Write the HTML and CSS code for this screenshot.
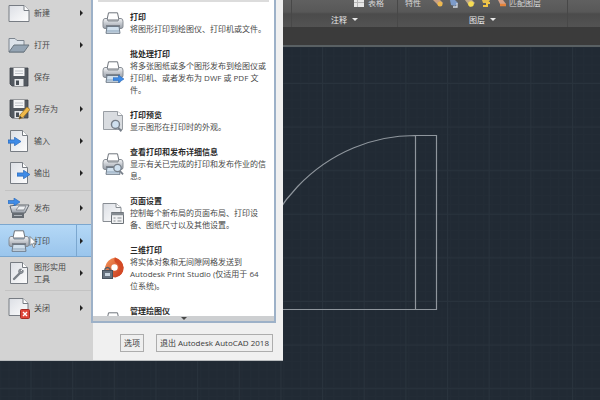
FILE: index.html
```html
<!DOCTYPE html>
<html lang="zh-CN">
<head>
    <meta charset="UTF-8">
    <meta name="viewport" content="width=device-width, initial-scale=1.0">
    <title>Autodesk AutoCAD 2018</title>
    <link rel="stylesheet" href="styles.css">
</head>
<body>

    <!-- 图标共用的图形 -->
    <svg class="defs" width="0" height="0" aria-hidden="true">
        <defs>
            <linearGradient id="paper" x1="0" y1="0" x2="1" y2="1">
                <stop offset="0" stop-color="#dcdfe5"/>
                <stop offset="1" stop-color="#fdfdfd"/>
            </linearGradient>
            <linearGradient id="metal" x1="0" y1="0" x2="0" y2="1">
                <stop offset="0" stop-color="#f3f4f6"/>
                <stop offset="1" stop-color="#969da7"/>
            </linearGradient>
            <linearGradient id="flame" x1="0" y1="0" x2="1" y2="1">
                <stop offset="0" stop-color="#f79a5c"/>
                <stop offset="1" stop-color="#c5321a"/>
            </linearGradient>
            <symbol id="arrow" viewBox="0 0 12 8">
                <path d="M0 2.500h6V0l6 4-6 4V5.500H0z" fill="#3f8be6" stroke="#2565b5" stroke-width=".6"/>
            </symbol>
            <symbol id="page" viewBox="0 0 22 22">
                <path d="M2.500 .5h12l5 5v16h-17z" fill="url(#paper)" stroke="#777c83"/>
                <path d="M14.500 .5v5h5" fill="#fff" stroke="#777c83"/>
            </symbol>
            <symbol id="printer" viewBox="0 0 22 22">
                <path d="M5 8L6.500 .8h9L17 8z" fill="#fff" stroke="#70757c"/>
                <path d="M3 6.500h2l1 2.500h10l1-2.500h2q2 0 2 3v5q0 2-2 2H3q-2 0-2-2v-5q0-3 2-3z" fill="url(#metal)" stroke="#7d838b" stroke-width=".9"/>
                <path d="M4 14h14" stroke="#5c626a" stroke-width="1.200"/>
                <path d="M5 14.500h12l1 6.800H4z" fill="#d0dfec" stroke="#6e7a87"/>
                <path d="M5 19h12" stroke="#8ca3b9"/>
            </symbol>
            <symbol id="floppy" viewBox="0 0 22 22">
                <path d="M2 2h18v18H4l-2-2z" fill="#535960" stroke="#3e4349" stroke-width=".8"/>
                <path d="M5.500 2h11v8h-11z" fill="#f4f5f6"/>
                <path d="M7 5h8M7 7.500h8" stroke="#c0c4c9"/>
                <path d="M6.500 13h9v7h-9z" fill="#e4e6e8"/>
                <path d="M8 14.500h3V19H8z" fill="#474d54"/>
            </symbol>
            <symbol id="lens" viewBox="0 0 12 12">
                <circle cx="5.500" cy="5" r="3.700" fill="#cfe0ef" stroke="#777f89" stroke-width="1.300"/>
                <path d="M8 8l3 3.300" stroke="#777f89" stroke-width="1.800"/>
            </symbol>
        </defs>
    </svg>

    <header class="ribbon">
        <section class="panel panel-edge"></section>
        <section class="panel panel-note">
            <div class="tools">
                <button class="tool">
                    <svg width="10" height="8" viewBox="0 0 10 8"><path d="M0 0h10v7H0z" fill="#e6e6e6"/><path d="M0 2.500h10M3.500 0v7" stroke="#b5b5b5"/></svg>
                    表格
                </button>
            </div>
            <button class="panel-title">注释 <span class="down"></span></button>
        </section>
        <section class="panel panel-layer">
            <div class="tools">
                <button class="tool">特性</button>
                <svg class="layer-icons" width="76" height="9" viewBox="0 0 76 9" aria-hidden="true">
                    <path d="M0 0h7l3 3-4 3z" fill="#c9a184"/><circle cx="7" cy="4" r="2.500" fill="#eeb94e"/>
                    <path d="M17 0h5l3 3-3 3-4-1z" fill="#7d9bc9"/><path d="M24 3v4h-4" fill="none" stroke="#d4dbe6" stroke-width="1.300"/>
                    <path d="M32 0h7l3 3-5 4z" fill="#bda88a"/><circle cx="38" cy="4" r="2.800" fill="#f7dd52"/>
                    <path d="M49 0h8l-2 3h-5z" fill="#e4be50"/><path d="M50 6h4V3h3" fill="none" stroke="#f1c443" stroke-width="2"/>
                    <path d="M65 0h5l3 4-5 2z" fill="#d4a188"/><path d="M67 5h6" stroke="#e5843c" stroke-width="2.500"/>
                </svg>
                <button class="tool">匹配图层</button>
            </div>
            <button class="panel-title">图层 <span class="down"></span></button>
        </section>
        <section class="panel panel-rest"></section>
    </header>
    <div class="tab-strip"></div>

    <main class="canvas">
        <svg class="drawing" width="100%" height="100%">
            <defs>
                <pattern id="minor" width="8.330" height="8.720" patternUnits="userSpaceOnUse">
                    <path d="M.5 0v9M0 .5h9" fill="none" stroke="#232c36" stroke-width="1"/>
                </pattern>
                <pattern id="major" x="30.500" y="36" width="41.650" height="43.600" patternUnits="userSpaceOnUse">
                    <path d="M.5 0v44M0 .5h42" fill="none" stroke="#29333d" stroke-width="1"/>
                </pattern>
            </defs>
            <rect width="100%" height="100%" fill="url(#minor)"/>
            <rect width="100%" height="100%" fill="url(#major)"/>
            <path d="M249 262.500H436.500V88.500H415A166 174 0 0 0 249 262.500M415.500 88.500v174" fill="none" stroke="#8f969d" stroke-width="1.200"/>
        </svg>
    </main>

    <div class="app-menu">
        <div class="menu-body">
            <nav class="commands">
                <button class="command">
                    <svg width="22" height="22" viewBox="0 0 22 22"><path d="M1 3.500h15l5 5v11H1z" fill="url(#paper)" stroke="#777c83"/><path d="M16 3.500v5h5" fill="#fff" stroke="#777c83"/></svg>
                    <span class="name">新建</span><span class="more"></span>
                </button>
                <button class="command">
                    <svg width="22" height="22" viewBox="0 0 22 22"><path d="M1 18V4.500h6l2 2h7V18z" fill="#dce3ea" stroke="#7c858f"/><path d="M1 18l5-7h15l-5 7z" fill="#94a4b3" stroke="#69757f"/></svg>
                    <span class="name">打开</span><span class="more"></span>
                </button>
                <button class="command">
                    <svg width="22" height="22"><use href="#floppy"/></svg>
                    <span class="name">保存</span>
                </button>
                <button class="command">
                    <svg width="22" height="22" viewBox="0 0 22 22"><use href="#floppy"/><path d="M11 21l1-4 7-8 3 2.500-7 8z" fill="#f0b94a" stroke="#9a7427" stroke-width=".8"/><path d="M11 21l1-3 2 1.500z" fill="#3b3b3b"/></svg>
                    <span class="name">另存为</span><span class="more"></span>
                </button>
                <button class="command">
                    <svg width="22" height="22" viewBox="0 0 22 22"><use href="#page"/><use href="#arrow" x="0" y="7" width="13" height="9"/></svg>
                    <span class="name">输入</span><span class="more"></span>
                </button>
                <button class="command">
                    <svg width="22" height="22" viewBox="0 0 22 22"><use href="#page"/><use href="#arrow" x="9" y="8" width="13" height="9"/></svg>
                    <span class="name">输出</span><span class="more"></span>
                </button>
                <hr class="line">
                <button class="command">
                    <svg width="22" height="22" viewBox="0 0 22 22"><path d="M2 9l7-1h12l-4 8H4z" fill="url(#metal)" stroke="#62686f"/><path d="M8 13l3-4h7l-2 4z" fill="#eef0f2" stroke="#777c83" stroke-width=".8"/><path d="M4 16h12v5H4z" fill="#666c73"/><path d="M6 18.500h8" stroke="#b1b6bb"/><use href="#arrow" x="0" y="1" width="12" height="8"/></svg>
                    <span class="name">发布</span><span class="more"></span>
                </button>
                <button class="command active">
                    <svg width="22" height="22"><use href="#printer"/></svg>
                    <span class="name">打印</span><span class="more"></span>
                    <svg class="pointer" width="8" height="12" viewBox="0 0 8 12"><path d="M1 .5v9l2-2 1.500 4 1.500-.7L4.500 7h3z" fill="#fff" stroke="#666" stroke-width=".7"/></svg>
                </button>
                <button class="command">
                    <svg width="22" height="22" viewBox="0 0 22 22"><use href="#page"/><path d="M6 17l6-6" stroke="#7b8189" stroke-width="2.400" stroke-linecap="round"/><path d="M15 8l-2 2-1-1 1.500-2q-3-.5-3 2.500 0 2 3 2 2.500-.5 1.500-3.500z" fill="#90969d" stroke="#6b7178" stroke-width=".7"/></svg>
                    <span class="name">图形实用<br>工具</span><span class="more"></span>
                </button>
                <hr class="line">
                <button class="command">
                    <svg width="22" height="22" viewBox="0 0 22 22"><path d="M1 1.500h14l5 5v12H1z" fill="url(#paper)" stroke="#777c83"/><path d="M15 1.500v5h5" fill="#fff" stroke="#777c83"/><rect x="12.500" y="12.500" width="9" height="9" rx="1" fill="#df4538" stroke="#a32c25"/><path d="M15 15l4 4m0-4l-4 4" stroke="#fff" stroke-width="1.400"/></svg>
                    <span class="name">关闭</span><span class="more"></span>
                </button>
            </nav>

            <div class="submenu">
                <div class="entries">
                    <button class="entry">
                        <svg width="22" height="22"><use href="#printer"/></svg>
                        <span class="text"><b>打印</b><span>将图形打印到绘图仪、打印机或文件。</span></span>
                    </button>
                    <button class="entry">
                        <svg width="22" height="22" viewBox="0 0 22 22"><use href="#printer"/><use href="#arrow" x="11" y="14" width="11" height="8"/></svg>
                        <span class="text"><b>批处理打印</b><span>将多张图纸或多个图形发布到绘图仪或<br>打印机、或者发布为 DWF 或 PDF 文<br>件。</span></span>
                    </button>
                    <button class="entry">
                        <svg width="22" height="22" viewBox="0 0 22 22"><path d="M1.500 1.500h14l5 4v14h-19z" fill="#d9dce0" stroke="#999ea4"/><path d="M15.500 1.500v4h5" fill="#fff" stroke="#999ea4"/><use href="#lens" x="7" y="9" width="14" height="13"/></svg>
                        <span class="text"><b>打印预览</b><span>显示图形在打印时的外观。</span></span>
                    </button>
                    <button class="entry">
                        <svg width="22" height="22" viewBox="0 0 22 22"><use href="#printer"/><use href="#lens" x="10" y="10" width="12" height="12"/></svg>
                        <span class="text"><b>查看打印和发布详细信息</b><span>显示有关已完成的打印和发布作业的信<br>息。</span></span>
                    </button>
                    <button class="entry">
                        <svg width="22" height="22" viewBox="0 0 22 22"><path d="M1 1.500h13l5 4v14H1z" fill="url(#paper)" stroke="#888d93"/><path d="M14 1.500v4h5" fill="#fff" stroke="#888d93"/><path d="M9.500 10.500h12v11h-12z" fill="#f1f2f3" stroke="#6c7278"/><path d="M9 12h13" stroke="#868c92" stroke-width="2.500"/><path d="M11.500 16h2m2 0h4m-8 3h2m2 0h4" stroke="#888d93"/></svg>
                        <span class="text"><b>页面设置</b><span>控制每个新布局的页面布局、打印设<br>备、图纸尺寸以及其他设置。</span></span>
                    </button>
                    <button class="entry">
                        <svg width="22" height="22" viewBox="0 0 22 22"><path d="M3 10Q5 2 13 .5q8 2.500 8.500 10 0 8-8 10Q4 20 3 10z" fill="url(#flame)"/><path d="M13 .5q-2 4 2 6 5 4 0 13 6.500-2 6.500-9-1-7-8.500-10z" fill="#d34a26"/><circle cx="12.500" cy="10.500" r="3.200" fill="#fff"/><path d="M3 14v-2q2.500-3 5 0v2" fill="none" stroke="#555d66" stroke-width="1.400"/><rect x=".5" y="13.500" width="10" height="8" fill="#66717e" stroke="#47515c"/><path d="M3 16h5v3H3z" fill="#c8d4df"/></svg>
                        <span class="text"><b>三维打印</b><span>将实体对象和无间隙网格发送到<br>Autodesk Print Studio (仅适用于 64<br>位系统)。</span></span>
                    </button>
                    <button class="entry entry-tall">
                        <svg width="22" height="22"><use href="#printer"/></svg>
                        <span class="text"><b>管理绘图仪</b></span>
                    </button>
                </div>
                <button class="scroll-down" aria-label="向下滚动"><span class="down"></span></button>
            </div>
        </div>

        <footer class="menu-footer">
            <button class="btn">选项</button>
            <button class="btn">退出 Autodesk AutoCAD 2018</button>
        </footer>
    </div>

</body>
</html>
```

FILE: styles.css
```css
* {
    box-sizing: border-box;
}
body {
    margin: 0;
    height: 100vh;
    display: flex;
    flex-direction: column;
    overflow: hidden;
    background-color: #212a34;
    font-family: "Open Sans", "Noto Sans CJK SC", sans-serif;
    font-size: 8px;
    line-height: 12px;
    color: #484848;
}
button {
    margin: 0;
    padding: 0;
    border: none;
    background: none;
    font: inherit;
    color: inherit;
    text-align: left;
    white-space: nowrap;
}
svg {
    flex: none;
    display: block;
}
.defs {
    position: absolute;
}

/* 功能区 */
.ribbon {
    display: flex;
    height: 27px;
    padding-left: 283px;
    background: linear-gradient(#606060 0, #585858 12px, #4b4b4b 14px, #535353 27px);
    color: #d6d6d6;
}
.panel {
    display: flex;
    flex-direction: column;
    border-right: 1px solid #484848;
}
.panel-edge {
    flex: 0 0 9px;
}
.panel-note {
    flex: 0 0 106px;
}
.panel-layer {
    flex: 0 0 170px;
}
.panel-rest {
    flex: 1;
    border-right: none;
}
.tools {
    display: flex;
    height: 13px;
    padding-left: 7px;
}
.panel-note .tools {
    padding-left: 62px;
}
.tool {
    display: flex;
    gap: 4px;
    height: 8px;
    line-height: 6px;
}
.layer-icons {
    margin-left: 12px;
}
.panel-title {
    display: flex;
    justify-content: center;
    align-items: center;
    gap: 5px;
    height: 13px;
    color: #e8e8e8;
}
.down {
    border: 3px solid transparent;
    border-top-color: currentColor;
    border-bottom: none;
}
.tab-strip {
    height: 20px;
    background-color: #3b3b3b;
    border-bottom: 2px solid #596063;
}
.canvas {
    flex: 1;
    min-height: 0;
}

/* 应用程序菜单 */
.app-menu {
    position: absolute;
    top: 0;
    left: 0;
    width: 283px;
    background: linear-gradient(to right, #d3d3d3 93px, #f0f0f0 93px);
    border-bottom: 1px solid #b9bcbe;
    overflow: hidden;
}
.menu-body {
    display: flex;
    height: 323px;
    padding-right: 7px;
}
.commands {
    width: 91px;
    margin-top: -3px;
}
.command {
    position: relative;
    display: flex;
    align-items: center;
    gap: 4px;
    width: 100%;
    height: 32px;
    padding: 0 8px;
}
.command .name {
    flex: 1;
}
.more {
    border: 3px solid transparent;
    border-left-color: #222;
    border-right: none;
}
.line {
    height: 1px;
    margin: 1px 0 1px 5px;
    border: none;
    background-color: #c3c3c3;
}
.command.active {
    height: 33px;
    background: linear-gradient(#b4d8f6, #9ac5ec);
    border: solid #7ba7cf;
    border-width: 1px 0;
}
.command.active::after {
    content: "";
    position: absolute;
    top: 0;
    right: 14px;
    height: 100%;
    border-left: 1px solid #7ba7cf;
}
.pointer {
    position: absolute;
    left: 29px;
    top: 11px;
}

.submenu {
    flex: 1;
    display: flex;
    flex-direction: column;
    background-color: #fff;
    border: 2px solid #9db1c8;
    border-top: none;
}
.entries {
    flex: 1;
    min-height: 0;
    display: flex;
    flex-direction: column;
    gap: 13px;
    margin: 0 5px;
    padding-top: 9px;
    border-top: 2px solid #dcdcdc;
    overflow: hidden;
}
.entry {
    flex: none;
    display: flex;
    align-items: center;
    gap: 6px;
    padding-left: 4px;
}
.entry-tall {
    height: 36px;
}
.text {
    display: flex;
    flex-direction: column;
    align-self: flex-start;
}
.text b {
    color: #2c2c2c;
}
.scroll-down {
    display: flex;
    justify-content: center;
    align-items: center;
    height: 5px;
    background-color: #cdcfd1;
}
.menu-footer {
    display: flex;
    justify-content: flex-end;
    gap: 12px;
    padding: 11px 10px 8px;
}
.btn {
    padding: 2px 3px;
    border: 1px solid #adadad;
    background-color: #efefef;
    color: #3a3a3a;
}
```
